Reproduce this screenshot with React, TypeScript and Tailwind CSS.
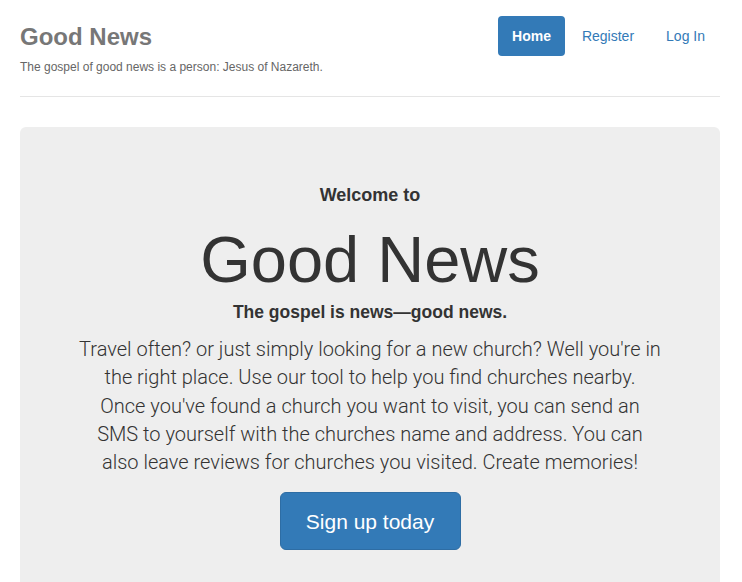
export default function App() {
	return (
		<div className="min-h-screen bg-white font-['Liberation_Sans',Arial,sans-serif] text-[#333]">
			<div className="ml-5 w-[700px]">
				{/* Header */}
				<div className="flex flex-row justify-between border-b border-[#e5e5e5] h-[97px]">
					<div className="flex flex-col">
						<h3 className="mt-6 text-[24px] leading-[26px] font-bold text-[#777]">Good News</h3>
						<p className="mt-[10px] text-[12px] leading-[14px] text-[#666]">
							The gospel of good news is a person: Jesus of Nazareth.
						</p>
					</div>
					<nav className="flex flex-row items-start gap-[2px] pt-4 text-[14px] leading-5">
						<a className="rounded px-[14px] py-[10px] bg-[#337ab7] text-white font-bold">Home</a>
						<a className="rounded px-[15px] py-[10px] text-[#337ab7]">Register</a>
						<a className="rounded px-[15px] py-[10px] text-[#337ab7]">Log In</a>
					</nav>
				</div>

				{/* Jumbotron */}
				<div className="mt-[30px] rounded-md bg-[#eee] pt-[58px] pb-12 flex flex-col items-center text-center">
					<h4 className="text-[18px] leading-5 font-bold">Welcome to</h4>
					<h1 className="mt-[19px] text-[65px] leading-[71px]">Good News</h1>
					<h5 className="mt-2 text-[17.5px] leading-[19px] font-bold">The gospel is news—good news.</h5>
					<p className="mt-[13px] font-['Roboto',sans-serif] text-[20px] leading-[28.25px] font-light">
						Travel often? or just simply looking for a new church? Well you're in
						<br />
						the right place. Use our tool to help you find churches nearby.
						<br />
						Once you've found a church you want to visit, you can send an
						<br />
						SMS to yourself with the churches name and address. You can
						<br />
						also leave reviews for churches you visited. Create memories!
					</p>
					<button className="mt-[16px] h-[58px] w-[181px] rounded-md border border-[#2e6da4] bg-[#337ab7] text-[21px] text-white">
						Sign up today
					</button>
				</div>
			</div>
		</div>
	)
}
